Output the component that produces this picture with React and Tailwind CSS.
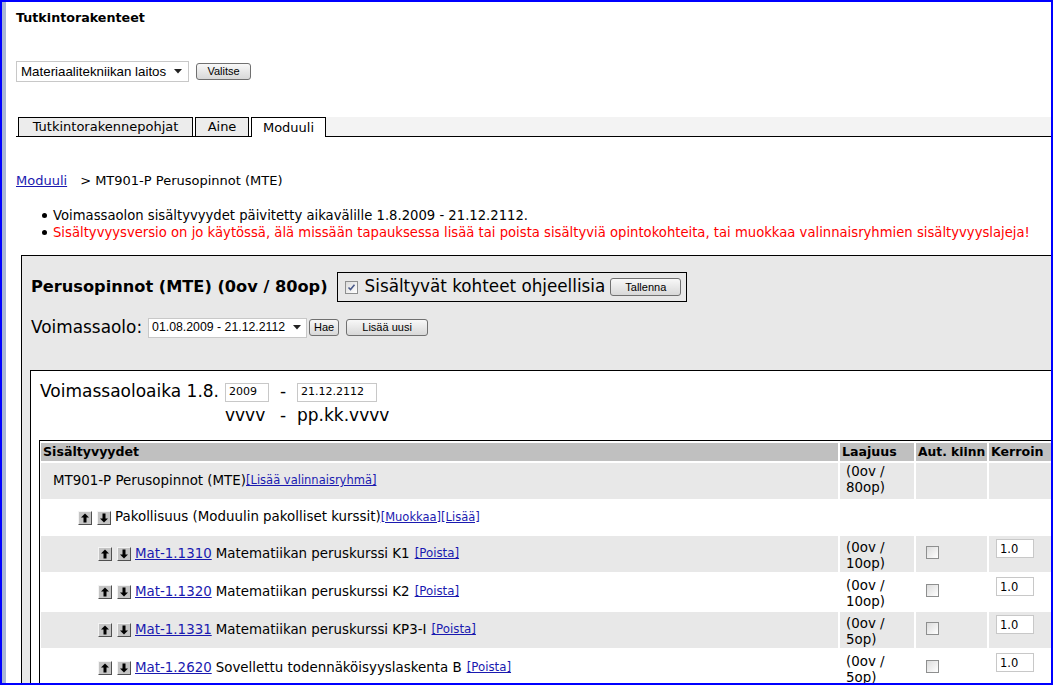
import React from "react";

const Btn = ({ children, className = "" }) => (
  <span
    className={
      "inline-flex items-center justify-center border border-[#707070] rounded-[3px] bg-gradient-to-b from-[#f8f8f8] to-[#d8d8d8] text-[11px] text-black font-['Liberation_Sans',sans-serif] leading-none " +
      className
    }
  >
    {children}
  </span>
);

const ArrowBtn = ({ down }) => (
  <span className="inline-flex w-[14px] h-[14px] items-center justify-center bg-[#c4c4c4] border border-t-[#f4f4f4] border-l-[#f4f4f4] border-r-[#505050] border-b-[#505050] shrink-0">
    <svg width="10" height="10" viewBox="0 0 10 10">
      <path
        d={down ? "M5 9.5 L1 5.5 H3.5 V0.5 H6.5 V5.5 H9 Z" : "M5 0.5 L1 4.5 H3.5 V9.5 H6.5 V4.5 H9 Z"}
        fill="black"
      />
    </svg>
  </span>
);

const Checkbox = ({ checked }) => (
  <span className="inline-flex w-[13px] h-[13px] border border-[#8e8f8f] bg-gradient-to-br from-[#dcdcdc] to-[#ffffff] items-center justify-center shrink-0">
    {checked && (
      <svg width="9" height="9" viewBox="0 0 9 9">
        <path d="M1.5 4.5 L3.5 6.5 L7.5 1.8" stroke="#4a5a8a" strokeWidth="1.6" fill="none" />
      </svg>
    )}
  </span>
);

const Link = ({ children, className = "" }) => (
  <span className={"text-[#1a1ab0] underline " + className}>{children}</span>
);

const rows = [
  {
    level: 0,
    gray: true,
    h: "h-[36px]",
    pt: "pt-[1px]",
    content: (
      <>
        <span>MT901-P Perusopinnot (MTE)</span>
        <Link className="text-[11.5px]">[Lisää valinnaisryhmä]</Link>
      </>
    ),
    laajuus: ["(0ov /", "80op)"],
  },
  {
    level: 1,
    gray: false,
    h: "h-[33px]",
    arrows: true,
    content: (
      <>
        <span>Pakollisuus (Moduulin pakolliset kurssit)</span>
        <Link className="text-[11.5px]">[Muokkaa]</Link>
        <Link className="text-[11.5px]">[Lisää]</Link>
      </>
    ),
  },
  { level: 2, gray: true, code: "Mat-1.1310", name: "Matematiikan peruskurssi K1", op: "10op)" },
  { level: 2, gray: false, code: "Mat-1.1320", name: "Matematiikan peruskurssi K2", op: "10op)" },
  { level: 2, gray: true, code: "Mat-1.1331", name: "Matematiikan peruskurssi KP3-I", op: "5op)" },
  { level: 2, gray: false, code: "Mat-1.2620", name: "Sovellettu todennäköisyyslaskenta B", op: "5op)" },
];

export default function App() {
  return (
    <div className="w-[1053px] h-[685px] overflow-hidden border-2 border-[#0000ff] flex bg-white text-black font-['DejaVu_Sans',sans-serif]">
      <div className="w-[4px] shrink-0 bg-[#a9b7d6]" />
      <div className="flex-1 min-w-0 overflow-hidden flex flex-col">
        {/* Title */}
        <div className="pl-[10px] pt-[8px] text-[12.7px] font-bold leading-[15px]">Tutkintorakenteet</div>

        {/* Department select */}
        <div className="pl-[10px] mt-[36px] flex items-center gap-[7px]">
          <div className="w-[173px] h-[21px] border border-[#c8c8c8] bg-white flex items-center justify-between pl-[4px] pr-[6px] font-['Liberation_Sans',sans-serif] text-[13.33px]">
            <span>Materiaalitekniikan laitos</span>
            <svg width="8" height="5" viewBox="0 0 8 5"><path d="M0 0 H8 L4 4.5 Z" fill="#222" /></svg>
          </div>
          <Btn className="w-[55px] h-[17px]">Valitse</Btn>
        </div>

        {/* Tabs */}
        <div className="ml-[10px] mt-[35px] flex items-end border-b border-black h-[20px]">
          <div className="w-[2px]" />
          <div className="h-[19px] w-[175px] border border-b-0 border-black bg-[#ececec] flex items-center justify-center text-[13px]">
            Tutkintorakennepohjat
          </div>
          <div className="w-[2px]" />
          <div className="h-[19px] w-[54px] border border-b-0 border-black bg-[#ececec] flex items-center justify-center text-[13px]">
            Aine
          </div>
          <div className="w-[2px]" />
          <div className="h-[20px] w-[75px] border border-b-0 border-black bg-white flex items-center justify-center text-[13px] -mb-px relative">
            Moduuli
          </div>
          <div className="flex-1 h-[19px] bg-[#f3f3f3]" />
        </div>

        {/* Breadcrumb */}
        <div className="pl-[10px] mt-[36px] text-[13px] leading-[16px] flex">
          <Link className="text-[#1a1a90]">Moduuli</Link>
          <span className="ml-[13px]">&gt; MT901-P Perusopinnot (MTE)</span>
        </div>

        {/* Messages */}
        <div className="mt-[17px] pl-[36px] text-[13.2px] leading-[17px] flex flex-col">
          <div className="flex items-center pt-[1px]">
            <span className="w-[5px] h-[5px] rounded-full bg-black mr-[6px]" />
            <span>Voimassaolon sisältyvyydet päivitetty aikavälille 1.8.2009 - 21.12.2112.</span>
          </div>
          <div className="flex items-center text-[#ff0000] whitespace-nowrap">
            <span className="w-[5px] h-[5px] rounded-full bg-black mr-[6px] shrink-0" />
            <span>Sisältyvyysversio on jo käytössä, älä missään tapauksessa lisää tai poista sisältyviä opintokohteita, tai muokkaa valinnaisryhmien sisältyvyyslajeja!</span>
          </div>
        </div>

        {/* Outer panel */}
        <div className="ml-[15px] mt-[14px] w-[1100px] flex-1 border-l border-t border-black bg-[#e8e8e8] pl-[8px] flex flex-col">
          <div className="mt-[16px] ml-[1px] flex items-center">
            <span className="text-[16.2px] font-bold">Perusopinnot (MTE) (0ov / 80op)</span>
            <div className="ml-[9px] h-[30px] w-[350px] border border-black flex items-center pl-[7px]">
              <Checkbox checked />
              <span className="ml-[7px] text-[16.8px]">Sisältyvät kohteet ohjeellisia</span>
              <Btn className="ml-[5px] w-[71px] h-[18px]">Tallenna</Btn>
            </div>
          </div>

          <div className="mt-[15px] ml-[1px] flex items-center h-[21px]">
            <span className="text-[16.9px]">Voimassaolo:</span>
            <div className="ml-[6px] w-[159px] h-[20px] border border-[#c8c8c8] bg-white flex items-center justify-between pl-[3px] pr-[5px] font-['Liberation_Sans',sans-serif] text-[12.3px]">
              <span>01.08.2009 - 21.12.2112</span>
              <svg width="8" height="5" viewBox="0 0 8 5"><path d="M0 0 H8 L4 4.5 Z" fill="#222" /></svg>
            </div>
            <Btn className="ml-[2px] w-[30px] h-[17px]">Hae</Btn>
            <Btn className="ml-[7px] w-[82px] h-[17px]">Lisää uusi</Btn>
          </div>

          {/* Inner panel */}
          <div className="mt-[32px] flex-1 border-l border-t border-black bg-white pl-[8px] flex flex-col">
            <div className="mt-[11px] ml-[1px] flex items-center h-[20px] text-[17px]">
              <span className="w-[185px]">Voimassaoloaika 1.8.</span>
              <span className="w-[44px] h-[19px] border border-[#c8c8c8] bg-white text-[11px] flex items-center pl-[3px]">2009</span>
              <span className="w-[28px] text-center">-</span>
              <span className="w-[80px] h-[19px] border border-[#c8c8c8] bg-white text-[11px] flex items-center pl-[3px]">21.12.2112</span>
            </div>
            <div className="mt-[4px] ml-[1px] flex items-center h-[20px] text-[17px]">
              <span className="w-[185px]" />
              <span className="w-[44px]">vvvv</span>
              <span className="w-[28px] text-center">-</span>
              <span>pp.kk.vvvv</span>
            </div>

            {/* Table */}
            <div className="mt-[14px] border-l border-t border-black pt-[2px] pl-[1px] flex-1">
              <div className="grid grid-cols-[797px_74px_71px_90px] gap-[2px]">
                <div className="h-[18px] bg-[#c0c0c0] text-[12.6px] font-bold flex items-center pl-[2px] whitespace-nowrap">Sisältyvyydet</div>
                <div className="h-[18px] bg-[#c0c0c0] text-[12.6px] font-bold flex items-center pl-[2px] whitespace-nowrap">Laajuus</div>
                <div className="h-[18px] bg-[#c0c0c0] text-[12.3px] font-bold flex items-center pl-[2px] whitespace-nowrap overflow-hidden">Aut. kiinn</div>
                <div className="h-[18px] bg-[#c0c0c0] text-[12.6px] font-bold flex items-center pl-[2px] whitespace-nowrap">Kerroin</div>
                {rows.map((r, i) => {
                  const bg = r.gray ? "bg-[#e8e8e8]" : "bg-white";
                  const h = r.h || "h-[36px]";
                  const pl = r.level === 0 ? "pl-[12px]" : r.level === 1 ? "pl-[37px]" : "pl-[57px]";
                  const lj = r.laajuus || (r.op ? ["(0ov /", r.op] : null);
                  const pt = r.pt || "pt-[4px]";
                  return (
                    <React.Fragment key={i}>
                      <div className={`${bg} ${h} ${pl} flex items-center text-[13.4px] whitespace-nowrap`}>
                        {(r.arrows || r.level === 2) && (
                          <span className="flex items-center gap-[5px] mr-[4px]">
                            <ArrowBtn />
                            <ArrowBtn down />
                          </span>
                        )}
                        {r.content ? (
                          r.content
                        ) : (
                          <>
                            <Link>{r.code}</Link>
                            <span className="ml-[4px]">{r.name}</span>
                            <Link className="ml-[5px] text-[11.8px]">[Poista]</Link>
                          </>
                        )}
                      </div>
                      <div className={`${bg} ${h} pl-[6px] ${pt} text-[13.4px] leading-[16px]`}>
                        {lj && (
                          <>
                            <div>{lj[0]}</div>
                            <div>{lj[1]}</div>
                          </>
                        )}
                      </div>
                      <div className={`${bg} ${h} pl-[10px] pt-[6px]`}>
                        {r.level === 2 && <Checkbox />}
                      </div>
                      <div className={`${bg} ${h} pl-[7px] pt-[3px]`}>
                        {r.level === 2 && (
                          <span className="w-[38px] h-[19px] border border-[#c8c8c8] bg-white text-[11.5px] flex items-center pl-[3px] pt-[2px]">1.0</span>
                        )}
                      </div>
                    </React.Fragment>
                  );
                })}
              </div>
            </div>
          </div>
        </div>
      </div>
    </div>
  );
}
